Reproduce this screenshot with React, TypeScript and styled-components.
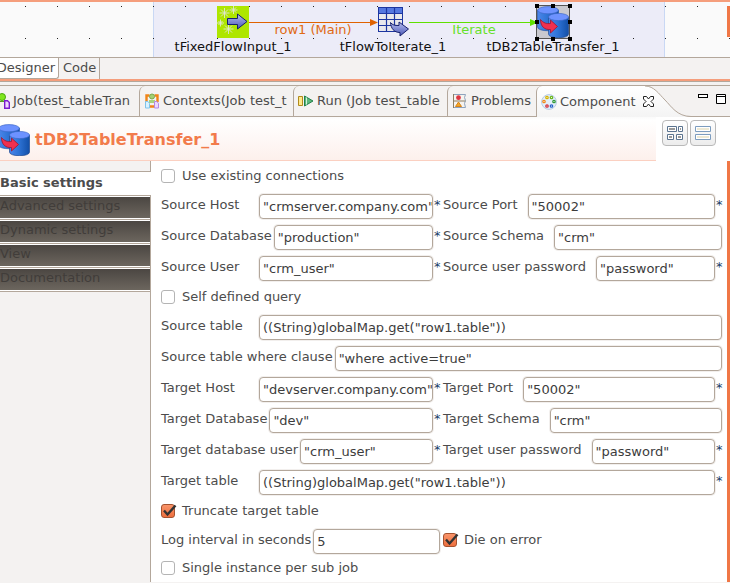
import React from "react";
import styled, { createGlobalStyle, css } from "styled-components";

const GlobalStyle = createGlobalStyle`
  * { box-sizing: border-box; }
  body { margin: 0; background: #f4f2f1; }
  body, button, input {
    font-family: "DejaVu Sans", sans-serif;
    font-size: 13px;
    line-height: 18px;
    color: #4c4c4c;
  }
  button { border: 0; padding: 0; margin: 0; background: none; text-align: left; white-space: nowrap; }
`;

const line = "#b3a79b";
const accent = "#f59e7c";

const Page = styled.div`
  min-height: 100vh;
  display: flex;
  flex-direction: column;
  overflow: hidden;
`;

/* ---------- design canvas ---------- */

const Canvas = styled.section`
  position: relative;
  height: 57px;
  border-top: 2px solid ${accent};
  background: #fafafa;
  overflow: hidden;
`;
const SubJob = styled.div`
  position: absolute;
  left: 153px;
  top: 0;
  bottom: 0;
  width: 512px;
  background: #ececf8;
  border: solid #c9d8f4;
  border-width: 0 1px;
`;
const CanvasLayer = styled.svg`
  position: absolute;
  inset: 0;
  width: 100%;
  height: 100%;
`;
const Node = styled.div<{ $x: number }>`
  position: absolute;
  left: ${(p) => p.$x}px;
  top: 4px;
  width: 160px;
  display: flex;
  flex-direction: column;
  align-items: center;
  gap: 1px;
  line-height: 16px;
  color: #111;
  svg { overflow: visible; }
`;
const LinkLabel = styled.span<{ $x: number; $color: string }>`
  position: absolute;
  left: ${(p) => p.$x}px;
  top: 19px;
  width: 100px;
  text-align: center;
  color: ${(p) => p.$color};
`;
const ScrollMark = styled.div`
  position: absolute;
  right: 0;
  top: 4px;
  width: 3px;
  height: 31px;
  background: #f07746;
`;

/* ---------- editor tabs ---------- */

const EditorTabs = styled.div`
  display: flex;
  height: 22px;
  border-top: 1px solid ${line};
  background: #f4f2f1;
`;
const EditorTab = styled.button<{ $active?: boolean }>`
  display: flex;
  align-items: center;
  justify-content: flex-end;
  padding: 0 3px 2px 4px;
  border-right: 1px solid ${line};
  ${(p) =>
    p.$active &&
    css`
      width: 59px;
      padding-bottom: 1px;
      background: #fff;
      border-bottom: 1px solid ${line};
      border-bottom-right-radius: 3px;
      overflow: hidden;
    `}
`;
const Sash = styled.div`
  height: 6px;
  border-top: 2px solid ${accent};
  background: linear-gradient(${line} 1px, #f4f2f1 1px);
`;

/* ---------- view tabs ---------- */

const ViewTabs = styled.div`
  display: flex;
  height: 32px;
  background: #f4f2f1;
  border-top: 1px solid ${line};
  border-bottom: 1px solid ${line};
`;
const ViewTab = styled.button<{ $w: number; $first?: boolean; $active?: boolean }>`
  flex: none;
  width: ${(p) => p.$w}px;
  display: flex;
  align-items: center;
  gap: 3px;
  padding-left: ${(p) => (p.$first ? 0 : 4)}px;
  border-left: ${(p) => (p.$first ? "0" : `1px solid ${line}`)};
  border-top-left-radius: ${(p) => (p.$first ? 0 : 6)}px;
  svg { flex: none; }
  ${(p) =>
    p.$active &&
    css`
      height: 31px;
      background: linear-gradient(#fff, #f4f4f4);
    `}
`;
const TabCurve = styled.svg`
  flex: none;
  display: block;
`;
const ViewControls = styled.div`
  margin-left: auto;
  display: flex;
  align-items: flex-start;
  gap: 8px;
  padding: 8px 4px 0 0;
  svg { display: block; }
`;

/* ---------- component header ---------- */

const HeaderBar = styled.header`
  display: flex;
  height: 44px;
  background: #fff;
`;
const HeaderTitle = styled.div`
  flex: 1;
  display: flex;
  align-items: center;
  gap: 5px;
  padding-top: 2px;
  background: linear-gradient(#fafafa 0, #fff 3px, #fdf0ec);
  border-bottom: 1px solid #fbd0c1;
`;
const Title = styled.h1`
  margin: 0;
  font: bold 16px/20px "DejaVu Sans", sans-serif;
  color: #f27b4b;
`;
const HeaderTools = styled.div`
  width: 74px;
  display: flex;
  align-items: flex-start;
  gap: 2px;
  padding: 3px 0 0 6px;
`;
const ToolButton = styled.button`
  width: 26px;
  height: 26px;
  display: flex;
  align-items: center;
  justify-content: center;
  border: 1px solid #b9b9b9;
  border-radius: 4px;
  background: linear-gradient(#fff, #ececec);
`;

/* ---------- body ---------- */

const Body = styled.div`
  flex: 1;
  display: flex;
  margin-bottom: 1px;
`;
const Side = styled.nav`
  width: 151px;
  flex: none;
  display: flex;
  flex-direction: column;
  background: #f4f2f1;
`;
const SideSpace = styled.div<{ $grow?: boolean }>`
  height: 10px;
  flex: ${(p) => (p.$grow ? "1" : "none")};
  border-right: 1px solid ${line};
  border-top: ${(p) => (p.$grow ? `1px solid ${line}` : "0")};
`;
const SideCurrent = styled.button`
  height: 24px;
  border-top: 1px solid ${line};
  padding-bottom: 2px;
  background: #fff;
  font-weight: bold;
`;
const SideItem = styled.button`
  height: 24px;
  border-top: 1px solid ${line};
  border-right: 1px solid ${line};
  padding: 1px 0;
  color: #413d3a;
  line-height: 18px;
  background: linear-gradient(#4b4642, #6c665e) content-box, #fff;
  span { display: block; height: 21px; }
`;
const Form = styled.form`
  flex: 1;
  min-width: 0;
  background: #fff;
  border-right: 3px solid #f07746;
  padding: 1px 5px 0 10px;
`;
const Row = styled.div`
  display: grid;
  grid-template-columns: repeat(2, minmax(0, 1fr));
  gap: 3px;
  min-height: 31px;
  padding-top: 2px;
  align-items: center;
`;
const FieldBox = styled.div<{ $wide?: boolean }>`
  display: flex;
  align-items: center;
  grid-column: ${(p) => (p.$wide ? "1 / -1" : "auto")};
`;
const Label = styled.label<{ $side: "left" | "right" }>`
  flex: none;
  padding: 0 ${(p) => (p.$side === "left" ? 2 : 10)}px 4px 0;
  min-width: ${(p) => (p.$side === "left" ? 98 : 0)}px;
`;
const TextInput = styled.input`
  flex: 1;
  min-width: 0;
  height: 25px;
  padding: 1px 0 1px 3px;
  border: 1px solid ${line};
  border-radius: 4px;
  box-shadow: 0 0 0 1px #f2efed;
  background: #fff;
  color: #3c3c3c;
  outline: none;
`;
const Required = styled.span`
  width: 7px;
  padding: 0 0 4px 1px;
  color: #1b3c66;
`;
const Check = styled.label`
  display: flex;
  align-items: center;
  gap: 7px;
`;
const CheckCell = styled.div`
  padding-bottom: 3px;
`;
const CheckRow = styled.div<{ $tight?: boolean }>`
  display: flex;
  align-items: center;
  height: ${(p) => (p.$tight ? 24 : 28)}px;
`;
const Box = styled.span`
  position: relative;
  display: flex;
  svg { position: absolute; left: 0; top: 0; overflow: visible; pointer-events: none; }
`;
const CheckInput = styled.input`
  appearance: none;
  width: 14px;
  height: 14px;
  margin: 0;
  border: 1px solid #b4b4b4;
  border-radius: 3px;
  background: #fff;
  &:checked {
    border-color: #a5522f;
    background: linear-gradient(#f9946a, #ee6f3e);
  }
  & + svg { display: none; }
  &:checked + svg { display: block; }
`;

/* ---------- drawings ---------- */

function Db2Icon({ id, crop = 0 }: { id: string; crop?: number }) {
  return (
    <svg width={32 - crop} height={32} viewBox={`${crop} 0 ${32 - crop} 32`} aria-hidden="true">
      <defs>
        <linearGradient id={id}>
          <stop offset="0" stopColor="#4c86ea" />
          <stop offset="0.45" stopColor="#2f74d6" />
          <stop offset="1" stopColor="#124fa8" />
        </linearGradient>
      </defs>
      <path d="M0.5 4v17c0 5 21 5 21 0V4z" fill={`url(#${id})`} stroke="#2556a8" strokeWidth=".7" />
      <ellipse cx="11" cy="4.2" rx="10.3" ry="3.6" fill="#6d92ff" stroke="#3d68c8" strokeWidth=".7" />
      <path d="M11.5 11v17c0 5 20 5 20 0V11z" fill={`url(#${id})`} stroke="#20498f" strokeWidth=".7" />
      <ellipse cx="21.5" cy="11" rx="10" ry="3.6" fill="#6d92ff" stroke="#3d68c8" strokeWidth=".7" />
      <path
        d="M3.500 13.500c3 3.500 6 4.500 10 4v-3.500l7 6.500-7 6.500v-3.500C7.500 24 3.500 20.500 3.500 13.500z"
        fill="#f0304f"
        stroke="#9c1630"
        strokeWidth=".8"
      />
    </svg>
  );
}

const BlockArrow = ({ id, d }: { id: string; d: string }) => (
  <>
    <defs>
      <linearGradient id={id} x1="0" y1="0" x2="0" y2="1">
        <stop offset="0" stopColor="#b5bdf0" />
        <stop offset="1" stopColor="#4b57b5" />
      </linearGradient>
    </defs>
    <path d={d} fill={`url(#${id})`} stroke="#17206c" />
  </>
);

const Spark = ({ x, y, r }: { x: number; y: number; r: number }) => (
  <path
    d={`M${x - r} ${y}h${2 * r}M${x} ${y - r}v${2 * r}M${x - r + 1.5} ${y - r + 1.5}l${2 * r - 3} ${2 * r - 3}M${x - r + 1.5} ${y + r - 1.5}l${2 * r - 3} ${3 - 2 * r}`}
    stroke="#dfe6d4"
    strokeWidth=".9"
  />
);

const FixedFlowIcon = () => (
  <svg width="32" height="32" viewBox="0 0 32 32" aria-hidden="true">
    <rect width="32" height="32" fill="#aee600" />
    <Spark x={7.5} y={7} r={5} />
    <Spark x={16.5} y={4} r={4} />
    <Spark x={3.5} y={17} r={3.5} />
    <Spark x={11.5} y={23} r={5} />
    <BlockArrow id="arrow-in" d="M10.500 12.500h10V8L30 15.500 20.500 23v-4.500h-10z" />
  </svg>
);

const IterateIcon = () => (
  <svg width="32" height="32" viewBox="0 0 32 32" aria-hidden="true">
    <rect x="1.500" y="1.500" width="24" height="24" fill="#e9e9ec" stroke="#1d36a0" />
    <rect x="2" y="2" width="23" height="5.500" fill="#5578e0" />
    <path d="M1.500 7.500h24M1.500 13.500h24M1.500 19.500h24M9.500 1.500v24M17.500 1.500v24" stroke="#1d36a0" strokeWidth="1.2" />
    <BlockArrow id="arrow-it" d="M13.500 16.500c2 2.500 4 3 8.500 3v-3.500l9.500 7-8.500 7v-3.500c-6 0-9-4-9.500-10z" />
  </svg>
);

const handles = [-1, 15, 32];
const SelectedDb2 = () => (
  <svg width="32" height="32" viewBox="0 0 32 32" aria-hidden="true">
    <rect x="-.5" y="-.5" width="33" height="33" fill="#c9c9cf" stroke="#555" />
    <Db2Icon id="db2-node" />
    {handles.map((x) =>
      handles.map((y) =>
        x === 15 && y === 15 ? null : <rect key={`${x}-${y}`} x={x - 1} y={y - 1} width="4" height="4" fill="#000" />,
      ),
    )}
  </svg>
);

const JobIcon = () => (
  <svg width="10" height="16" viewBox="6 0 10 16" aria-hidden="true">
    <path d="M6 8.500h5v5h2" fill="none" stroke="#5a9a28" />
    <circle cx="8" cy="4" r="3.500" fill="#7fe61c" stroke="#4aa80e" />
    <path d="M10.700 7.700h2.800l1.800 1.800v5.800h-4.600z" fill="#f0d8ff" stroke="#7a1fd0" strokeWidth="1.400" />
  </svg>
);
const ContextIcon = () => (
  <svg width="16" height="16" viewBox="0 0 16 16" aria-hidden="true">
    <path d="M2.500 9V2.500h3M10.500 2.500h3V9M5 13.500h6" fill="none" stroke="#f08418" strokeWidth="2.400" />
    <circle cx="8" cy="3.500" r="2.500" fill="#a4cf72" stroke="#7cab4c" />
    <path d="M5 10V7h6v3z" fill="#a9d37c" />
    <path d="M1.500 8.500h2.500l1.500 2v4.500h-4z" fill="#d8f2ff" stroke="#7ec3ea" />
    <path d="M10.500 8.500h2.500l1.500 2v4.500h-4z" fill="#ecd8ff" stroke="#b48ae2" />
  </svg>
);
const RunIcon = () => (
  <svg width="16" height="16" viewBox="0 0 16 16" aria-hidden="true">
    <path d="M.5 3.500h4v9h-4z" fill="#ffe98a" stroke="#b08a1c" />
    <path d="M6.500 3v10L15 8z" fill="#5cb87c" stroke="#23804a" />
    <path d="M8.500 4.500v7" stroke="#d4f0dc" />
  </svg>
);
const ProblemsIcon = () => (
  <svg width="16" height="16" viewBox="0 0 16 16" aria-hidden="true">
    <path d="M1.500 1.500h12l-1 3 1 3-1 3 1 4h-12z" fill="#f6f3ee" stroke="#8ea3bd" />
    <path d="M1.500 1v14M1.500 8h12" stroke="#8d7c60" />
    <circle cx="6.500" cy="4.700" r="2.400" fill="#dd3540" />
    <path d="M3.500 13.500 6.500 9l3 4.500z" fill="#f6a623" stroke="#d5831a" />
  </svg>
);
const dots: [number, number, string][] = [
  [6, 3.500, "#d8b400"], [10.500, 3.500, "#6db81f"], [13, 7.500, "#2f9a3a"],
  [10.500, 12, "#2864c8"], [6, 12, "#d02c3a"], [3, 7.500, "#f08a1c"],
];
const PaletteIcon = () => (
  <svg width="16" height="16" viewBox="0 0 16 16" aria-hidden="true">
    <circle cx="8" cy="8" r="7.400" fill="#e3eefa" stroke="#b6cbe2" />
    {dots.map(([x, y, c]) => (
      <circle key={c} cx={x} cy={y} r="1.200" fill="#fff" stroke={c} strokeWidth="1.300" />
    ))}
  </svg>
);
const CloseIcon = () => (
  <svg width="11" height="11" viewBox="0 0 11 11" aria-hidden="true">
    <path d="M.5.5h3l2 2.500 2-2.500h3v2.500L8 5.500 10.500 8v2.500h-3l-2-2.500-2 2.500h-3V8L3 5.500.5 3z" fill="#fff" stroke="#222" />
  </svg>
);

/* ---------- form parts ---------- */

type FieldProps = { label: string; value: string; side?: "left" | "right"; required?: boolean; wide?: boolean };

function Field({ label, value, side = "left", required, wide }: FieldProps) {
  const id = label.toLowerCase().replace(/ /g, "-");
  return (
    <FieldBox $wide={wide}>
      <Label htmlFor={id} $side={side}>{label}</Label>
      <TextInput id={id} defaultValue={value} spellCheck={false} />
      {required && <Required>*</Required>}
    </FieldBox>
  );
}

function CheckField({ label, checked }: { label: string; checked?: boolean }) {
  return (
    <Check>
      <Box>
        <CheckInput type="checkbox" defaultChecked={checked} />
        <svg width="14" height="14" viewBox="0 0 14 14" aria-hidden="true">
          <path d="M3 6.500 6.500 10.500 14.500 1.500" fill="none" stroke="#333" strokeWidth="2.400" />
        </svg>
      </Box>
      {label}
    </Check>
  );
}

const sideItems = ["Advanced settings", "Dynamic settings", "View", "Documentation"];

export default function App() {
  return (
    <Page>
      <GlobalStyle />
      <Canvas>
        <SubJob />
        <CanvasLayer aria-hidden="true">
          <defs>
            <pattern id="grid" x="25" y="4" width="32" height="32" patternUnits="userSpaceOnUse">
              <rect width="1" height="1" fill="#222" />
            </pattern>
          </defs>
          <rect width="100%" height="100%" fill="url(#grid)" />
          <path d="M249 20.500h122" stroke="#e06200" />
          <path d="M370 17l8 3.500-8 3.500z" fill="#e06200" />
          <path d="M409 20.500h122" stroke="#5fe000" />
          <path d="M530 17l8 3.500-8 3.500z" fill="#5fe000" />
        </CanvasLayer>
        <Node $x={153}><FixedFlowIcon />tFixedFlowInput_1</Node>
        <Node $x={313}><IterateIcon />tFlowToIterate_1</Node>
        <Node $x={473}><SelectedDb2 />tDB2TableTransfer_1</Node>
        <LinkLabel $x={263} $color="#e06a14">row1 (Main)</LinkLabel>
        <LinkLabel $x={424} $color="#66e02a">Iterate</LinkLabel>
        <ScrollMark />
      </Canvas>

      <EditorTabs>
        <EditorTab type="button" $active>Designer</EditorTab>
        <EditorTab type="button">Code</EditorTab>
      </EditorTabs>
      <Sash />

      <ViewTabs>
        <ViewTab type="button" $w={139} $first><JobIcon />Job(test_tableTran</ViewTab>
        <ViewTab type="button" $w={154}><ContextIcon />Contexts(Job test_t</ViewTab>
        <ViewTab type="button" $w={154}><RunIcon />Run (Job test_table</ViewTab>
        <ViewTab type="button" $w={89}><ProblemsIcon />Problems</ViewTab>
        <ViewTab type="button" $w={103} $active><PaletteIcon />Component</ViewTab>
        <TabCurve width="52" height="31" viewBox="0 0 52 31" aria-hidden="true">
          <defs>
            <linearGradient id="tab-fill" x1="0" y1="0" x2="0" y2="1">
              <stop offset="0" stopColor="#fff" />
              <stop offset="1" stopColor="#f4f4f4" />
            </linearGradient>
          </defs>
          <path d="M0 0H6C15 0 20 8 26 14S38 30.500 52 30.500V31H0z" fill="url(#tab-fill)" />
          <path d="M6 0C15 0 20 8 26 14S38 30.500 52 30.500" fill="none" stroke={line} />
          <g transform="translate(4 10)"><CloseIcon /></g>
        </TabCurve>
        <ViewControls>
          <svg width="10" height="4" aria-hidden="true"><rect x=".5" y=".5" width="9" height="3" fill="#fff" stroke="#000" /></svg>
          <svg width="10" height="10" aria-hidden="true"><path d="M.5.5h9v9h-9zM.5 2.500h9" fill="#fff" stroke="#000" /></svg>
        </ViewControls>
      </ViewTabs>

      <HeaderBar>
        <HeaderTitle>
          <Db2Icon id="db2-head" crop={2} />
          <Title>tDB2TableTransfer_1</Title>
        </HeaderTitle>
        <HeaderTools>
          <ToolButton type="button" aria-label="Grid layout">
            <svg width="16" height="14" viewBox="0 0 16 14" aria-hidden="true">
              <path d="M.5.5h9v5h-9zM11.500.5h4v5h-4zM.5 8.500h6v5h-6zM9.500 8.500h6v5h-6z" fill="#fff" stroke="#5b7490" />
              <path d="M2 2h6v2H2zM13 2h1v2h-1zM2 10h3v2H2zM11 10h3v2h-3z" fill="#999" />
            </svg>
          </ToolButton>
          <ToolButton type="button" aria-label="List layout">
            <svg width="16" height="14" viewBox="0 0 16 14" aria-hidden="true">
              <path d="M.5.5h15v5H.5zM.5 8.500h15v5H.5z" fill="#fff" stroke="#7c9cbf" />
              <path d="M2 2h12v2H2zM2 10h12v2H2z" fill="#ece8d4" />
            </svg>
          </ToolButton>
        </HeaderTools>
      </HeaderBar>

      <Body>
        <Side>
          <SideSpace />
          <SideCurrent type="button">Basic settings</SideCurrent>
          {sideItems.map((s) => <SideItem type="button" key={s}><span>{s}</span></SideItem>)}
          <SideSpace $grow />
        </Side>
        <Form>
          <CheckRow><CheckField label="Use existing connections" /></CheckRow>
          <Row>
            <Field label="Source Host" value={'"crmserver.company.com"'} required />
            <Field label="Source Port" value={'"50002"'} side="right" required />
          </Row>
          <Row>
            <Field label="Source Database" value={'"production"'} required />
            <Field label="Source Schema" value={'"crm"'} side="right" />
          </Row>
          <Row>
            <Field label="Source User" value={'"crm_user"'} required />
            <Field label="Source user password" value={'"password"'} side="right" required />
          </Row>
          <CheckRow><CheckField label="Self defined query" /></CheckRow>
          <Row><Field label="Source table" value={'((String)globalMap.get("row1.table"))'} wide /></Row>
          <Row><Field label="Source table where clause" value={'"where active=true"'} wide /></Row>
          <Row>
            <Field label="Target Host" value={'"devserver.company.com"'} required />
            <Field label="Target Port" value={'"50002"'} side="right" required />
          </Row>
          <Row>
            <Field label="Target Database" value={'"dev"'} required />
            <Field label="Target Schema" value={'"crm"'} side="right" />
          </Row>
          <Row>
            <Field label="Target database user" value={'"crm_user"'} required />
            <Field label="Target user password" value={'"password"'} side="right" required />
          </Row>
          <Row><Field label="Target table" value={'((String)globalMap.get("row1.table"))'} wide required /></Row>
          <CheckRow><CheckField label="Truncate target table" checked /></CheckRow>
          <Row>
            <Field label="Log interval in seconds" value="5" />
            <CheckCell><CheckField label="Die on error" checked /></CheckCell>
          </Row>
          <CheckRow $tight><CheckField label="Single instance per sub job" /></CheckRow>
        </Form>
      </Body>
    </Page>
  );
}
